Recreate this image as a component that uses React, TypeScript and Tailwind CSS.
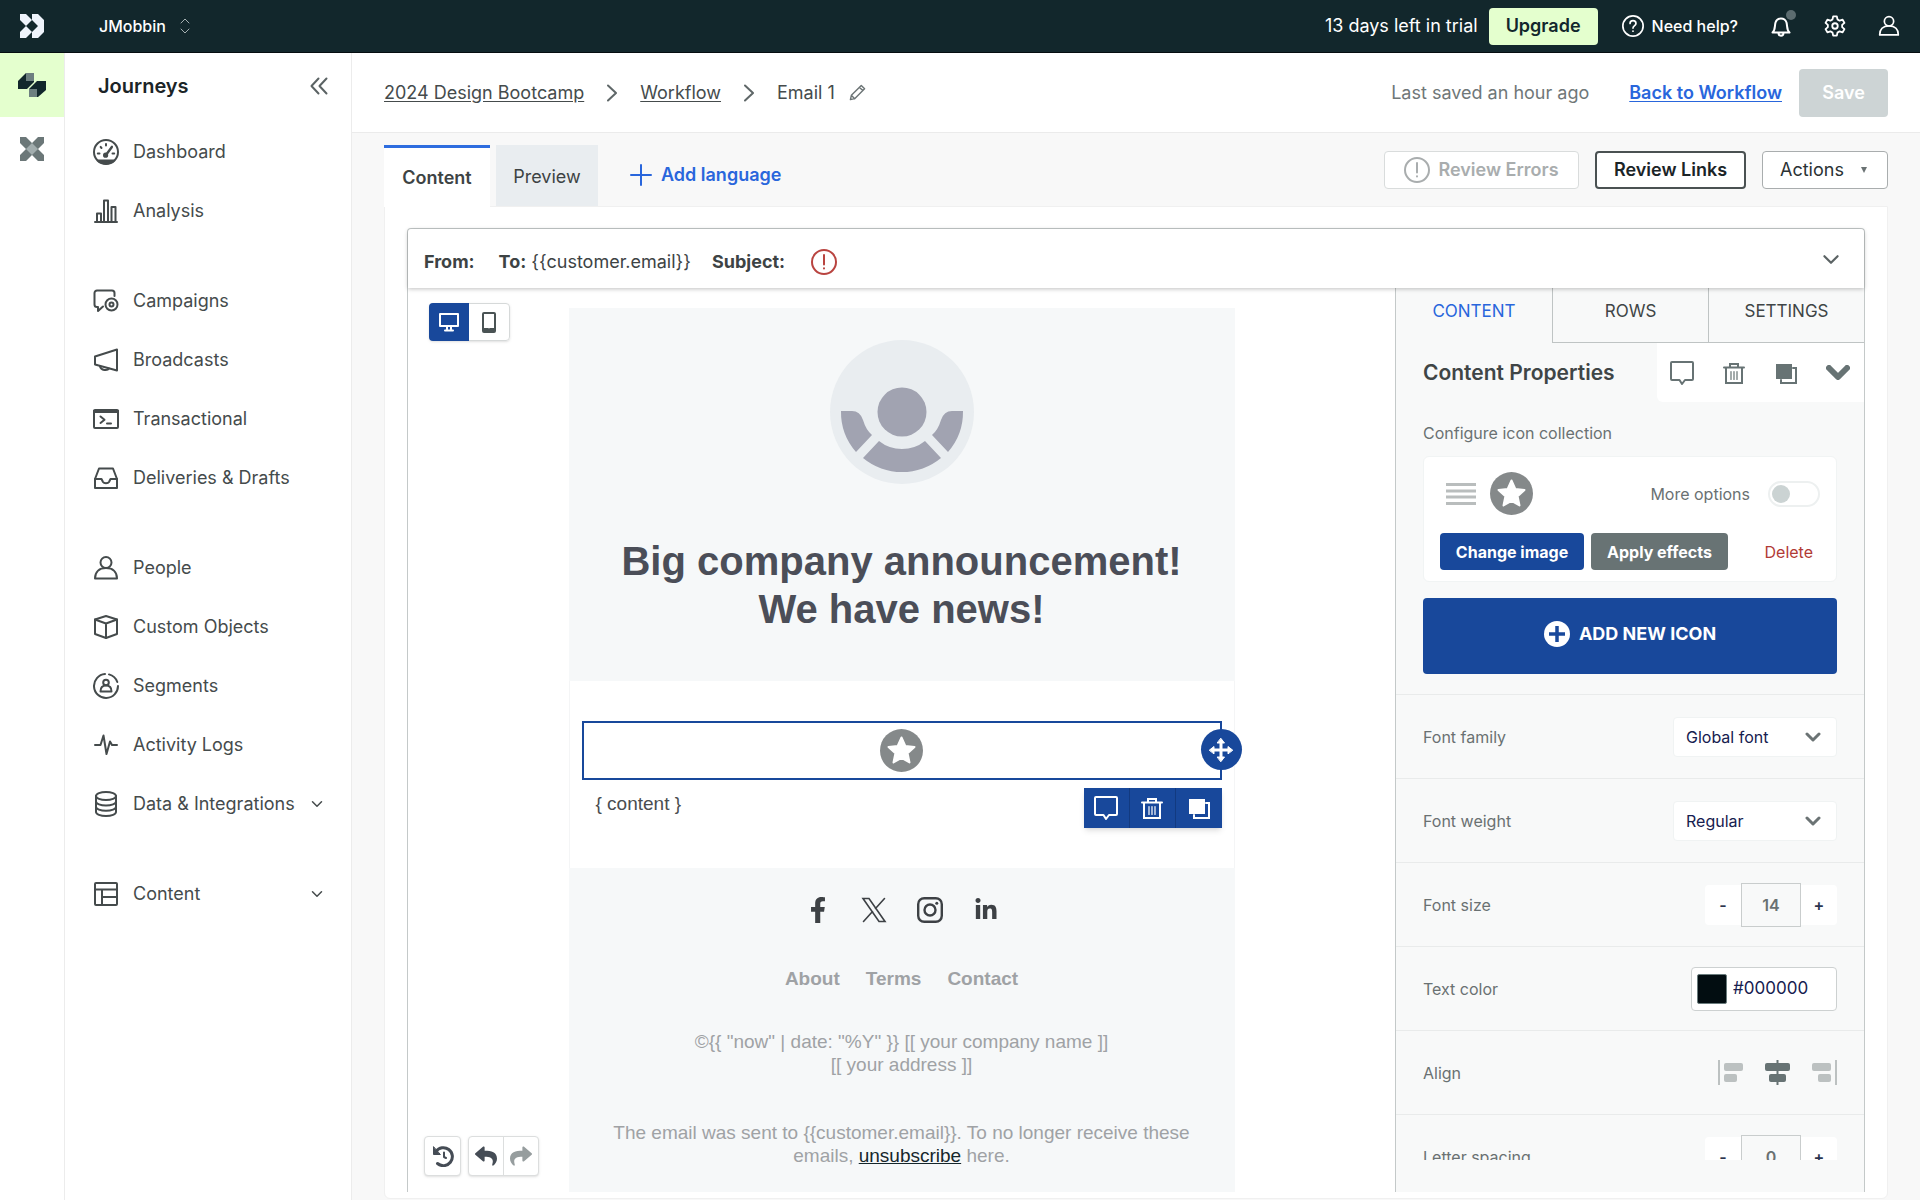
import React from "react";
import { FaFacebookF, FaLinkedinIn, FaReply, FaShare } from "react-icons/fa";

type IconProps = { className?: string };

const Svg = ({
  className = "size-[26px]",
  box = "0 0 26 26",
  width = 2,
  children,
}: IconProps & { box?: string; width?: number; children: React.ReactNode }) => (
  <svg
    className={`shrink-0 ${className}`}
    viewBox={box}
    fill="none"
    stroke="currentColor"
    strokeWidth={width}
    strokeLinejoin="round"
    strokeLinecap="round"
    aria-hidden="true"
  >
    {children}
  </svg>
);

const BrandMark = () => (
  <svg className="size-6 shrink-0" viewBox="0 0 24 24" fill="#eef3fb" aria-hidden="true">
    <path d="M0 0H6L12 6 6 12 0 6Z" />
    <path d="M0 18 6 12 12 18 6 24H0Z" />
    <path d="M12 0H18L24 6V18L18 24H12V18L18 12 12 6Z" />
  </svg>
);

const JourneysMark = () => (
  <svg className="h-6 w-7 shrink-0" viewBox="0 0 28 24" aria-hidden="true">
    <path d="M8 0H16V9L9 16H0V8Z" fill="#12272c" />
    <path d="M8 0H16V8H8Z" fill="#6d7f80" />
    <path d="M19 8H28V17L20 24H11V16Z" fill="#12272c" />
    <path d="M11 16H19V24H11Z" fill="#6d7f80" />
  </svg>
);

const PipelinesMark = () => (
  <svg className="size-6 shrink-0" viewBox="0 0 24 24" aria-hidden="true">
    <path d="M0 0H6L12 6 18 0H24V6L18 12 24 18V24H18L12 18 6 24H0V18L6 12 0 6Z" fill="#6b7778" />
    <path d="M12 6 18 12 12 18 6 12Z" fill="#a2adae" />
  </svg>
);

const DashboardIcon = () => (
  <Svg>
    <circle cx="13" cy="13" r="12" />
    <path d="M5 21.5H21A12 12 0 0 1 5 21.5Z" fill="currentColor" />
    <path d="M12.4 16.8 18.5 8.5" strokeWidth="2.4" />
    <circle cx="12.6" cy="16.2" r="1.6" fill="currentColor" />
    <path d="M13 5V6.4M7.6 7.9 8.5 9M4.8 14.5H6.5M19.5 14.5H21.2M19 7.5 18.6 8.2" />
  </Svg>
);
const AnalysisIcon = () => (
  <Svg>
    <path d="M2 24H24" />
    <path d="M4 24V15.500H8V24M11 24V2.500H15V24M18.500 24V9H22.500V24" />
  </Svg>
);
const CampaignsIcon = () => (
  <Svg>
    <path d="M21.500 8V5A2.500 2.500 0 0 0 19 2.500H4A2.500 2.500 0 0 0 1.500 5V16.500A2.500 2.500 0 0 0 4 19H5V23L10 18.500" />
    <circle cx="18.500" cy="16.500" r="6" />
    <circle cx="18.500" cy="16.500" r="2" />
  </Svg>
);
const BroadcastsIcon = () => (
  <Svg>
    <path d="M2 9.500 24 2.500V23.500L2 17.500Z" />
    <path d="M7 19.500C8 23.500 14.500 24 16 21.500" />
  </Svg>
);
const TransactionalIcon = () => (
  <Svg>
    <rect x="1" y="4" width="24" height="18" rx="1" />
    <path d="M1 5.500H25" strokeWidth="3" />
    <path d="M7.500 10.500 11.500 13.800 7.500 17M14 17.500H18" />
  </Svg>
);
const InboxIcon = () => (
  <Svg>
    <path d="M2 14 6 3.500H20L24 14V23H2Z" />
    <path d="M2 14H8.500L10 17C11 18.500 15 18.500 16 17L17.500 14H24" />
  </Svg>
);
const PersonIcon = ({ className }: IconProps) => (
  <Svg className={className}>
    <circle cx="13" cy="7.500" r="5.500" />
    <path d="M2 23.500C2 16.500 6.500 13 13 13S24 16.500 24 23.500Z" />
  </Svg>
);
const CubeIcon = () => (
  <Svg>
    <path d="M13 2 24 5.500V20L13 24 2 20V5.500Z" />
    <path d="M2 5.500 13 9.500 24 5.500M13 9.500V24" />
  </Svg>
);
const SegmentsIcon = () => (
  <Svg>
    <path d="M12 1A12 12 0 1 0 25 13M16 1.400A12 12 0 0 1 24.300 9" />
    <circle cx="13" cy="9.500" r="2.800" />
    <path d="M7.500 18.500C7.500 14.500 10 12.500 13 12.500S18.500 14.500 18.500 18.500Z" />
  </Svg>
);
const ActivityIcon = () => (
  <Svg>
    <path d="M2 13H7.500L10.500 3.500 13.500 22 17 9.500 19 13H24" />
  </Svg>
);
const DatabaseIcon = () => (
  <Svg>
    <ellipse cx="13" cy="5" rx="10" ry="4" />
    <path d="M3 5V21C3 23.200 7.500 25 13 25S23 23.200 23 21V5" />
    <path d="M3 10.500C3 12.700 7.500 14.500 13 14.500S23 12.700 23 10.500M3 15.800C3 18 7.500 19.800 13 19.800S23 18 23 15.800" />
  </Svg>
);
const LayoutIcon = () => (
  <Svg>
    <rect x="2" y="2" width="22" height="22" rx="1" />
    <path d="M2 8.500H24M9 8.500V24M9 16H24" />
  </Svg>
);
const ChevronDown = ({ className, width = 2 }: IconProps & { width?: number }) => (
  <Svg className={className} box="0 0 16 10" width={width}>
    <path d="M2 2 8 8 14 2" />
  </Svg>
);
const ChevronRight = () => (
  <Svg className="h-[18px] w-[10px] text-[#5f6768]" box="0 0 10 18">
    <path d="M1 1.500 9 9 1 16.500" />
  </Svg>
);
const AlertCircle = ({ className }: IconProps) => (
  <Svg className={className}>
    <circle cx="13" cy="13" r="12" />
    <path d="M13 6V15.500M13 19.300V19.500" />
  </Svg>
);
const CommentIcon = () => (
  <Svg className="size-6" box="0 0 24 24">
    <path d="M2 1H22Q23 1 23 2V18Q23 19 22 19H15L12 23 9.500 19H2Q1 19 1 18V2Q1 1 2 1Z" />
  </Svg>
);
const TrashIcon = () => (
  <Svg className="size-6" box="0 0 24 24">
    <path d="M2 6.500H22M8 6V3H16V6M4 7V22H20V7" strokeLinejoin="miter" />
    <path d="M9 10.500V18.500M12 10.500V18.500M15 10.500V18.500" strokeWidth="1.200" />
  </Svg>
);
const CopyIcon = () => (
  <Svg className="size-6" box="0 0 24 24">
    <path d="M19 7H22V22H7V19" strokeLinejoin="miter" />
    <path d="M2 3H18V18H2Z" fill="currentColor" stroke="none" />
  </Svg>
);
const StarBadge = () => (
  <svg className="size-[43px] shrink-0" viewBox="0 0 43 43" aria-hidden="true">
    <circle cx="21.500" cy="21.500" r="21.500" fill="#85898a" />
    <path
      d="M21.500 8.500 25.300 17 34.500 18 27.600 24.200 29.500 33.500 21.500 28.800 13.500 33.500 15.400 24.200 8.500 18 17.700 17Z"
      fill="#fff"
      stroke="#fff"
      strokeWidth="2"
      strokeLinejoin="round"
    />
  </svg>
);

const navGroups = [
  [
    { label: "Dashboard", icon: <DashboardIcon /> },
    { label: "Analysis", icon: <AnalysisIcon /> },
  ],
  [
    { label: "Campaigns", icon: <CampaignsIcon /> },
    { label: "Broadcasts", icon: <BroadcastsIcon /> },
    { label: "Transactional", icon: <TransactionalIcon /> },
    { label: "Deliveries & Drafts", icon: <InboxIcon /> },
  ],
  [
    { label: "People", icon: <PersonIcon /> },
    { label: "Custom Objects", icon: <CubeIcon /> },
    { label: "Segments", icon: <SegmentsIcon /> },
    { label: "Activity Logs", icon: <ActivityIcon /> },
    { label: "Data & Integrations", icon: <DatabaseIcon />, expandable: true },
  ],
  [{ label: "Content", icon: <LayoutIcon />, expandable: true }],
];

function TopBar() {
  return (
    <header className="flex h-[53px] shrink-0 items-center border-b border-[#050d10] bg-[#12272c] px-5 text-white">
      <BrandMark />
      <button className="ml-[55px] flex items-center gap-[14px] text-base font-medium">
        JMobbin
        <Svg className="h-4 w-[10px] text-[#a5b0b2]" box="0 0 10 16" width={1}>
          <path d="M1 5 5 1 9 5M1 11 5 15 9 11" />
        </Svg>
      </button>
      <div className="ml-auto flex items-center">
        <span className="text-lg">13 days left in trial</span>
        <button className="ml-[11px] h-[37px] rounded-sm bg-[#e4ffce] px-[17px] text-lg font-semibold text-[#12272c]">
          Upgrade
        </button>
        <button className="ml-6 flex items-center gap-2 text-base font-medium">
          <Svg className="size-[22px]">
            <circle cx="13" cy="13" r="12" />
            <path d="M9.500 10C9.500 5.500 16.500 5.500 16.500 10C16.500 12.500 13 12.500 13 15.500M13 19V19.200" />
          </Svg>
          Need help?
        </button>
        <button aria-label="Notifications" className="relative ml-8">
          <Svg className="size-[22px]" box="0 0 22 22" width={2}>
            <path d="M2.500 17.500C5.500 15 4.500 11 5.500 7.500C6.500 4.500 8 3.500 11 3.500S15.500 4.500 16.500 7.500C17.500 11 16.500 15 19.500 17.500ZM8.500 18C8.500 21.500 13.500 21.500 13.500 18" />
          </Svg>
          <span className="absolute -top-[5px] left-4 size-[10px] rounded-full bg-[#5c6c70]" />
        </button>
        <button aria-label="Settings" className="ml-8">
          <Svg className="size-[22px]" box="0 0 24 24">
            <path d="M10 1.500H14L14.700 4.800 17 6.200 20.300 5.100 22.300 8.600 19.800 10.800V13.200L22.300 15.400 20.300 18.900 17 17.800 14.700 19.200 14 22.500H10L9.300 19.200 7 17.800 3.700 18.900 1.700 15.400 4.200 13.200V10.800L1.700 8.600 3.700 5.100 7 6.200 9.300 4.800Z" />
            <circle cx="12" cy="12" r="3" />
          </Svg>
        </button>
        <button aria-label="Account" className="ml-8">
          <PersonIcon className="size-[22px]" />
        </button>
      </div>
    </header>
  );
}

function Sidebar() {
  return (
    <>
      <nav aria-label="Products" className="flex w-[65px] shrink-0 flex-col border-r border-[#ececec]">
        <a href="#journeys" aria-label="Journeys" className="flex h-16 items-center justify-center bg-[#e4ffce]">
          <JourneysMark />
        </a>
        <a href="#pipelines" aria-label="Data pipelines" className="flex h-16 items-center justify-center">
          <PipelinesMark />
        </a>
      </nav>
      <aside className="flex w-[287px] shrink-0 flex-col border-r border-[#ececec]">
        <div className="flex h-[69px] items-center justify-between pr-[23px] pb-1 pl-[33px]">
          <h2 className="text-xl font-semibold text-[#1b2427]">Journeys</h2>
          <button aria-label="Collapse sidebar" className="text-[#5b6364]">
            <Svg className="size-[18px]" box="0 0 18 18">
              <path d="M8.500 1.500 1.500 9 8.500 16.500M16.500 1.500 9.500 9 16.500 16.500" />
            </Svg>
          </button>
        </div>
        <div className="flex flex-col gap-[31px]">
          {navGroups.map((group) => (
            <ul key={group[0].label}>
              {group.map((item) => (
                <li key={item.label}>
                  <a href="#nav" className="flex h-[59px] items-center pr-7 pl-7 text-lg text-[#454b4c]">
                    {item.icon}
                    <span className="ml-[14px]">{item.label}</span>
                    {"expandable" in item && <ChevronDown className="ml-auto h-2 w-3" />}
                  </a>
                </li>
              ))}
            </ul>
          ))}
        </div>
      </aside>
    </>
  );
}

function PageHeader() {
  return (
    <div className="flex h-20 shrink-0 items-center border-b border-[#ebebeb] bg-white px-8 text-lg text-[#454b4c]">
      <a href="#campaign" className="underline underline-offset-2">2024 Design Bootcamp</a>
      <span className="mx-[23px]"><ChevronRight /></span>
      <a href="#workflow" className="underline underline-offset-2">Workflow</a>
      <span className="mx-[23px]"><ChevronRight /></span>
      <span>Email 1</span>
      <button aria-label="Rename email" className="ml-[14px] text-[#6c7475]">
        <Svg className="size-[17px]" box="0 0 18 18" width={1.5}>
          <path d="M1.500 16.500 2.500 12 13 1.500 16.500 5 6 15.500ZM11 3.500 14.500 7M2.500 12 6 15.500" />
        </Svg>
      </button>
      <span className="ml-auto text-[#6f7778]">Last saved an hour ago</span>
      <a href="#workflow" className="ml-10 font-semibold text-[#2966dc] underline underline-offset-2">
        Back to Workflow
      </a>
      <button disabled className="ml-[17px] h-12 w-[89px] rounded-sm bg-[#cdd4d5] font-semibold text-white">Save</button>
    </div>
  );
}

function Toolbar() {
  return (
    <div className="flex h-[73px] shrink-0 pt-3 text-lg text-[#3d4344]">
      <div role="tablist" className="flex">
        <button role="tab" aria-selected="true" className="z-10 -mb-px w-[106px] border-t-[3px] border-[#2e6ddf] bg-white font-semibold">
          Content
        </button>
        <button role="tab" aria-selected="false" className="ml-[6px] w-[102px] bg-[#e9edf0] pt-[2px]">
          Preview
        </button>
      </div>
      <button className="ml-8 flex items-center gap-[9px] self-start pt-4 font-semibold text-[#2966dc]">
        <Svg className="size-[22px]" box="0 0 22 22">
          <path d="M11 1V21M1 11H21" />
        </Svg>
        Add language
      </button>
      <div className="mt-[6px] ml-auto flex h-[38px] gap-4">
        <button disabled className="flex w-[195px] items-center justify-center gap-2 rounded-sm border border-[#d9dcdc] bg-white font-semibold text-[#a9adae]">
          <AlertCircle />
          Review Errors
        </button>
        <button className="w-[151px] rounded-sm border-2 border-[#4a5152] bg-white font-semibold text-[#1b2427]">
          Review Links
        </button>
        <button className="flex w-[126px] items-center justify-between rounded-sm border border-[#a9adae] bg-white pr-5 pl-[17px] text-[#2b3234]">
          Actions
          <svg className="h-2 w-[6px]" viewBox="0 0 6 8" aria-hidden="true">
            <path d="M0 1H6L3 7Z" fill="#6a7273" />
          </svg>
        </button>
      </div>
    </div>
  );
}

function EmailPreview() {
  return (
    <section className="relative min-w-0 flex-1 bg-white pt-5">
      <div className="absolute top-[15px] left-[21px] flex h-[38px] rounded-sm border border-[#d6d9d9] shadow-sm">
        <button aria-label="Desktop view" className="-my-px -ml-px flex w-10 items-center justify-center rounded-l-sm bg-[#18489b] text-white">
          <Svg className="size-[22px]" box="0 0 22 22" width={2}>
            <path d="M2 3H20V15H2ZM9 15V18M13 15V18M7 19.500H15" />
          </Svg>
        </button>
        <button aria-label="Mobile view" className="flex w-10 items-center justify-center text-[#4a5354]">
          <Svg className="size-[22px]" box="0 0 22 22" width={2}>
            <rect x="5" y="2" width="12" height="19" rx="1" />
            <path d="M6 18.500H10M12 18.500H16" strokeWidth="3" />
          </Svg>
        </button>
      </div>

      <div className="mx-auto flex h-full w-[666px] flex-col font-['Liberation_Sans',Arial,sans-serif] text-[19px] leading-[23px]">
        <div className="flex flex-col items-center bg-[#f6f8f9] pt-8 pb-12">
          <svg className="size-36" viewBox="0 0 144 144" role="img" aria-label="Company logo">
            <circle cx="72" cy="72" r="72" fill="#e9edf0" />
            <g fill="#a1a3b1">
              <circle cx="72" cy="72" r="24.500" />
              <path d="M11 71H22Q30 71 33 80Q36 90 42 95L26 112A61 61 0 0 1 11 71Z" />
              <path d="M133 71H122Q114 71 111 80Q108 90 102 95L118 112A61 61 0 0 0 133 71Z" />
              <path d="M33 118 49 101Q59 109 72 109T95 101L111 118A61 61 0 0 1 33 118Z" />
            </g>
          </svg>
          <h1 className="mt-[53px] text-center text-[40px] leading-[48px] font-bold text-[#4b4e58]">
            Big company announcement!
            <br />
            We have news!
          </h1>
        </div>
        <div className="border-x border-[#f4f5f6] px-3 pt-10 pb-[53px]">
          <div className="relative flex h-[59px] items-center justify-center border-2 border-[#18489b]">
            <StarBadge />
            <button aria-label="Move block" className="absolute top-[6px] -right-[22px] flex size-[41px] items-center justify-center rounded-full bg-[#18489b] text-white">
              <Svg className="size-[26px]" width={3}>
                <path d="M13 4V22M4 13H22" />
                <path
                  d="M13 1.500 16.500 6H9.500ZM13 24.500 16.500 20H9.500ZM1.500 13 6 9.500V16.500ZM24.500 13 20 9.500V16.500Z"
                  fill="currentColor"
                  strokeWidth="1"
                />
              </Svg>
            </button>
            <div className="absolute top-[65px] -right-[2px] flex h-10 divide-x divide-[#123a80] bg-[#18489b] text-white shadow-md">
              <button aria-label="Comment" className="flex w-[46px] items-center justify-center"><CommentIcon /></button>
              <button aria-label="Delete" className="flex w-[46px] items-center justify-center"><TrashIcon /></button>
              <button aria-label="Duplicate" className="flex w-[46px] items-center justify-center"><CopyIcon /></button>
            </div>
          </div>
          <p className="mt-3 pl-[14px] text-[#4a4d50]">{"{ content }"}</p>
        </div>
        <div className="flex-1 bg-[#f6f8f9] pt-7 text-center text-[#9fa2a5]">
          <div className="flex items-center justify-center gap-7 text-[#3d4145]">
            <a href="#facebook" aria-label="Facebook" className="flex size-7 items-center justify-center">
              <FaFacebookF className="size-[26px]" />
            </a>
            <a href="#x" aria-label="X" className="flex size-7 items-center justify-center">
              <Svg className="size-[26px]" width={1.6}>
                <path d="M2 1.500H8L24 24.500H18ZM23.500 1.500 14.500 11.500M11.500 14.500 2.500 24.500" strokeLinejoin="miter" />
              </Svg>
            </a>
            <a href="#instagram" aria-label="Instagram" className="flex size-7 items-center justify-center">
              <Svg className="size-[26px]" width={2.4}>
                <rect x="1.200" y="1.200" width="23.600" height="23.600" rx="6" />
                <circle cx="13" cy="13" r="5.500" />
                <path d="M19.800 6.200V6.300" strokeWidth="3" />
              </Svg>
            </a>
            <a href="#linkedin" aria-label="LinkedIn" className="flex size-7 items-center justify-center">
              <FaLinkedinIn className="size-6" />
            </a>
          </div>
          <div className="mt-[43px] flex justify-center gap-[26px] font-bold">
            <a href="#about">About</a>
            <a href="#terms">Terms</a>
            <a href="#contact">Contact</a>
          </div>
          <p className="mt-10">
            {'©{{ "now" | date: "%Y" }} [[ your company name ]]'}
            <br />
            {"[[ your address ]]"}
          </p>
          <p className="mt-[45px] px-10">
            {"The email was sent to {{customer.email}}. To no longer receive these emails, "}
            <a href="#unsubscribe" className="text-[#15262b] underline">unsubscribe</a>
            {" here."}
          </p>
        </div>
      </div>

      <div className="absolute bottom-4 left-4 flex h-10 gap-[7px] text-[#454c55]">
        <button aria-label="Version history" className="flex w-[37px] items-center justify-center rounded-sm border border-[#dcdede] bg-white shadow-sm">
          <Svg className="size-[22px]" box="0 0 22 22" width={3}>
            <path d="M4 6.500A9 9 0 1 1 5.500 18.500" />
            <path d="M1.500 2V9.500H8Z" fill="currentColor" strokeWidth="1" />
            <path d="M12 7.500V12L14 13" strokeWidth="2" />
          </Svg>
        </button>
        <div className="flex divide-x divide-[#dcdede] rounded-sm border border-[#dcdede] bg-white shadow-sm">
          <button aria-label="Undo" className="flex w-[35px] items-center justify-center"><FaReply className="size-[22px]" /></button>
          <button aria-label="Redo" className="flex w-[34px] items-center justify-center text-[#969d9e]"><FaShare className="size-[22px]" /></button>
        </div>
      </div>
    </section>
  );
}

function PropertyRow({ label, htmlFor, children }: { label: string; htmlFor?: string; children: React.ReactNode }) {
  return (
    <div className="flex h-[84px] items-center justify-between border-t border-[#e9ebeb] pr-[27px] pl-[27px]">
      <label htmlFor={htmlFor}>{label}</label>
      {children}
    </div>
  );
}

function SelectBox({ id, value }: { id: string; value: string }) {
  return (
    <div className="relative">
      <select id={id} className="h-10 w-[164px] appearance-none rounded-sm border border-[#f0f3f3] bg-white pl-3 text-[#16204f]">
        <option>{value}</option>
      </select>
      <ChevronDown className="pointer-events-none absolute top-[15px] right-4 h-[10px] w-4 text-[#6b7374]" width={3} />
    </div>
  );
}

function Stepper({ id, value }: { id: string; value: string }) {
  return (
    <div className="flex items-center font-semibold text-[#2c344f]">
      <button aria-label="Decrease" className="h-10 w-9 rounded-l-sm bg-white">-</button>
      <input
        id={id}
        defaultValue={value}
        className="h-11 w-[60px] border border-[#c9cdcd] bg-transparent text-center font-semibold text-[#6a7172]"
      />
      <button aria-label="Increase" className="h-10 w-9 rounded-r-sm bg-white">+</button>
    </div>
  );
}

function PropertiesPanel() {
  return (
    <section className="flex w-[469px] shrink-0 flex-col border-l border-[#c4c9c9] bg-[#f8f9f9] text-base text-[#6a7172]">
      <div role="tablist" className="grid h-[55px] shrink-0 grid-cols-3 text-[17px] text-[#3f4546]">
        <button role="tab" aria-selected="true" className="pb-[7px] text-[#2966dc]">CONTENT</button>
        <button role="tab" aria-selected="false" className="border-b border-l border-[#bfc4c4] pb-[6px]">ROWS</button>
        <button role="tab" aria-selected="false" className="border-b border-l border-[#bfc4c4] pb-[6px]">SETTINGS</button>
      </div>
      <div className="min-h-0 flex-1 overflow-hidden">
        <div className="flex h-[59px] items-center justify-between pl-[27px]">
          <h2 className="text-[21px] font-semibold text-[#3f4546]">Content Properties</h2>
          <div className="flex h-full items-center gap-7 rounded-bl-md bg-white pr-[14px] pl-[13px] text-[#677374]">
            <button aria-label="Comment"><CommentIcon /></button>
            <button aria-label="Delete"><TrashIcon /></button>
            <button aria-label="Duplicate"><CopyIcon /></button>
            <button aria-label="Collapse"><ChevronDown className="h-[15px] w-6" width={4} /></button>
          </div>
        </div>
        <div className="px-[27px] pt-[19px] pb-5">
          <p className="leading-6">Configure icon collection</p>
          <div className="mt-[11px] rounded-md border border-[#f1f4f4] bg-white px-4 pt-[15px] pb-[11px]">
            <div className="flex items-center">
              <Svg className="ml-[6px] h-[22px] w-[30px] text-[#b9bdbd]" box="0 0 30 22" width={3}>
                <path d="M0 1.500H30M0 8H30M0 14H30M0 20.500H30" strokeLinecap="butt" />
              </Svg>
              <span className="ml-[14px]"><StarBadge /></span>
              <label className="ml-auto flex cursor-pointer items-center gap-[18px]">
                More options
                <input type="checkbox" role="switch" className="peer sr-only" />
                <span className="flex h-[26px] w-[52px] items-center rounded-full border-2 border-[#edf0f0] pl-[2px]">
                  <span className="size-[18px] rounded-full bg-[#cbd3d3]" />
                </span>
              </label>
            </div>
            <div className="mt-[18px] flex h-[37px] items-stretch">
              <button className="w-36 rounded-sm bg-[#18489b] font-bold text-white">Change image</button>
              <button className="ml-[7px] w-[137px] rounded-sm bg-[#687374] font-bold text-white">Apply effects</button>
              <button className="mr-[7px] ml-auto text-[#b13a35]">Delete</button>
            </div>
          </div>
          <button className="mt-4 flex h-19 w-full items-center justify-center gap-[9px] rounded-sm bg-[#18489b] pb-1 text-lg font-bold text-white">
            <svg className="size-[26px]" viewBox="0 0 26 26" aria-hidden="true">
              <circle cx="13" cy="13" r="13" fill="#fff" />
              <path d="M13 5V21M5 13H21" stroke="#18489b" strokeWidth="3.500" />
            </svg>
            ADD NEW ICON
          </button>
        </div>
        <PropertyRow label="Font family" htmlFor="font-family">
          <SelectBox id="font-family" value="Global font" />
        </PropertyRow>
        <PropertyRow label="Font weight" htmlFor="font-weight">
          <SelectBox id="font-weight" value="Regular" />
        </PropertyRow>
        <PropertyRow label="Font size" htmlFor="font-size">
          <Stepper id="font-size" value="14" />
        </PropertyRow>
        <PropertyRow label="Text color" htmlFor="text-color">
          <div className="flex h-11 w-[146px] items-center rounded-sm border border-[#cdd1d1] bg-white px-[5px]">
            <span className="size-[30px] shrink-0 rounded-xs border border-[#6a7c7d] bg-[#020d11]" />
            <input id="text-color" defaultValue="#000000" className="ml-[6px] w-full min-w-0 text-[17px] text-[#16204f]" />
          </div>
        </PropertyRow>
        <PropertyRow label="Align">
          <div className="flex gap-[22px] text-[#bcc1c1]">
            <button aria-label="Align left">
              <svg className="size-[25px]" viewBox="0 0 25 25" fill="currentColor" aria-hidden="true">
                <path d="M0 0H2V25H0Z" />
                <rect x="6" y="3" width="19" height="8" rx="2" />
                <rect x="6" y="14" width="13" height="8" rx="2" />
              </svg>
            </button>
            <button aria-label="Align center" className="text-[#677374]">
              <svg className="size-[25px]" viewBox="0 0 25 25" fill="currentColor" aria-hidden="true">
                <path d="M11.500 0H13.500V25H11.500Z" />
                <rect x="0" y="3" width="25" height="8" rx="2" />
                <rect x="4" y="14" width="17" height="8" rx="2" />
              </svg>
            </button>
            <button aria-label="Align right">
              <svg className="size-[25px]" viewBox="0 0 25 25" fill="currentColor" aria-hidden="true">
                <path d="M23 0H25V25H23Z" />
                <rect x="0" y="3" width="19" height="8" rx="2" />
                <rect x="6" y="14" width="13" height="8" rx="2" />
              </svg>
            </button>
          </div>
        </PropertyRow>
        <PropertyRow label="Letter spacing" htmlFor="letter-spacing">
          <Stepper id="letter-spacing" value="0" />
        </PropertyRow>
      </div>
      <div className="h-8 shrink-0" />
    </section>
  );
}

export default function App() {
  return (
    <div className="flex h-screen flex-col overflow-hidden bg-white font-['Inter',sans-serif]">
      <TopBar />
      <div className="flex min-h-0 flex-1">
        <Sidebar />
        <main className="flex min-w-0 flex-1 flex-col bg-[#f8f8f8]">
          <PageHeader />
          <div className="flex min-h-0 flex-1 flex-col px-8">
            <Toolbar />
            <div className="mb-px flex min-h-0 flex-1 flex-col rounded-b-md border border-[#f0f0f0] bg-white px-[22px] pt-[21px] pb-[6px]">
              <div className="flex min-h-0 flex-1 flex-col rounded-t-sm border border-b-0 border-[#c4c9c9]">
                <div className="z-10 flex h-[59px] shrink-0 items-center rounded-t-sm bg-white pt-[6px] pr-6 pl-4 text-lg text-[#3d4344] shadow-[0_1px_4px_rgba(0,0,0,0.25)]">
                  <strong className="font-bold">From:</strong>
                  <span className="ml-6">
                    <strong className="font-bold">To:</strong> {"{{customer.email}}"}
                  </span>
                  <strong className="ml-[21px] font-bold">Subject:</strong>
                  <span className="ml-[26px] text-[#b94440]"><AlertCircle /></span>
                  <button aria-label="Expand details" className="ml-auto pb-1 text-[#5b6364]">
                    <ChevronDown className="h-[11px] w-[18px]" />
                  </button>
                </div>
                <div className="flex min-h-0 flex-1">
                  <EmailPreview />
                  <PropertiesPanel />
                </div>
              </div>
            </div>
          </div>
        </main>
      </div>
    </div>
  );
}
